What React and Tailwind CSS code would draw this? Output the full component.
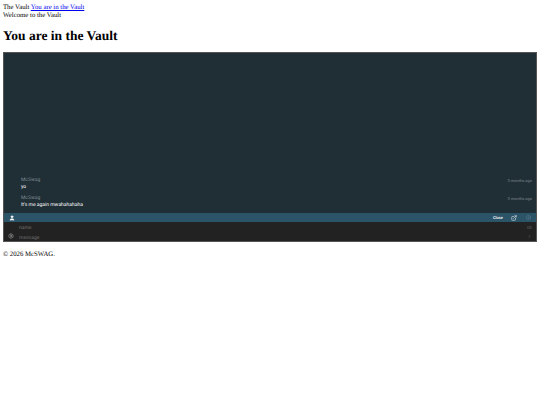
import React from "react";
import { User, Settings, ExternalLink, Info, Volume2, ChevronRight } from "lucide-react";

const messages = [
  { name: "McSwag", text: "yo", time: "3 months ago" },
  { name: "McSwag", text: "It's me again mwahahahaha", time: "3 months ago" },
];

export default function App() {
  return (
    <div className="min-h-[405px] bg-white p-[3px] font-['Liberation_Serif',serif] text-[6.75px] leading-[7.75px] text-black [text-rendering:geometricPrecision]">
      <div className="pt-px">
        The Vault{" "}
        <a href="#" className="text-[#0000ee] underline">
          You are in the Vault
        </a>
      </div>
      <div>Welcome to the Vault</div>

      <h1 className="mt-[8px] mb-[9px] text-[13.5px] leading-[15.5px] font-bold">
        You are in the Vault
      </h1>

      {/* Chat */}
      <div className="flex h-[190px] flex-col border border-[#555] bg-[#202e36] font-['Roboto',sans-serif]">
        <div className="flex flex-1 flex-col justify-end gap-[4px] pb-[4px] pl-[17px] pr-[4px]">
          {messages.map((msg, index) => (
            <div key={index} className="flex justify-between">
              <div>
                <p className="text-[5px] leading-[7px] text-[#7b878d]">{msg.name}</p>
                <p className="text-[5px] leading-[7px] text-white">{msg.text}</p>
              </div>
              <span className="text-[4px] leading-[7px] text-[#7b878d]">{msg.time}</span>
            </div>
          ))}
        </div>

        <div className="flex h-[9px] items-center bg-[#2c5468] px-[5px] text-white">
          <User size={6} fill="white" />
          <span className="ml-auto text-[4px] font-medium">Close</span>
          <ExternalLink size={6} className="ml-[8px]" />
          <Info size={5} className="ml-[9px] text-[#6e8b99]" />
        </div>

        <div className="flex h-[19px] items-start bg-[#222222] px-[4px] text-[#6e6e6e]">
          <Settings size={6} className="mt-[11px] text-[#aaa]" />
          <div className="ml-[5px] flex-1 pt-px text-[5px] leading-[10px]">
            <p>name</p>
            <p>message</p>
          </div>
          <div className="mt-[3px] flex flex-col items-end gap-[4px]">
            <Volume2 size={5} />
            <ChevronRight size={5} />
          </div>
        </div>
      </div>

      <p className="mt-[9px]">© 2026 McSWAG.</p>
    </div>
  );
}
